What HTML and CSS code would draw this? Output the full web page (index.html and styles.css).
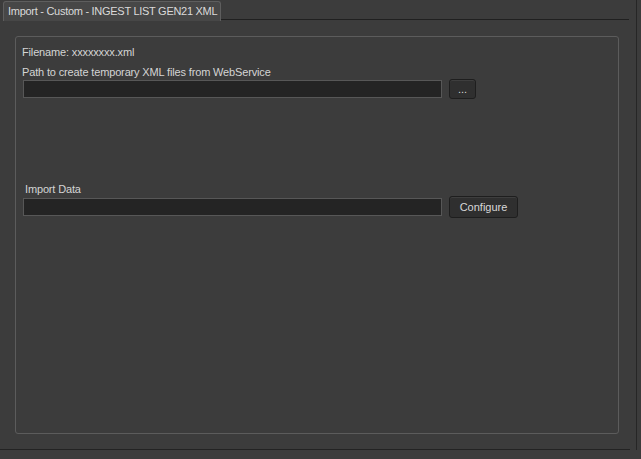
FILE: index.html
```html
<!DOCTYPE html>
<html lang="en">
  <head>
    <meta charset="UTF-8" />
    <title>Import - Custom - INGEST LIST GEN21 XML</title>
    <link rel="stylesheet" href="styles.css">
  </head>
  <body>
    <div class="window">
      <div class="tabs">
        <div class="tab">Import - Custom - INGEST LIST GEN21 XML</div>
        <div class="tab-line"></div>
      </div>
      <div class="pane">
        <div class="group">
          <div class="label">Filename: xxxxxxxx.xml</div>
          <div class="label label-path">Path to create temporary XML files from WebService</div>
          <div class="field-row">
            <div class="field"></div>
            <button class="button button-browse">...</button>
          </div>
          <div class="label label-import">Import Data</div>
          <div class="field-row field-row-import">
            <div class="field"></div>
            <button class="button button-configure">Configure</button>
          </div>
        </div>
      </div>
    </div>
  </body>
</html>
```

FILE: styles.css
```css
body {
  margin: 0;
  background-color: #3c3c3c;
  font-family: "Liberation Sans", Arial, sans-serif;
  font-size: 11px;
  color: #d4d4d4;
  width: 641px;
  height: 459px;
  overflow: hidden;
}
.window {
  width: 637px;
  height: 450px;
  border-right: 1px solid #262626;
  box-sizing: border-box;
}
.tabs {
  display: flex;
  align-items: flex-end;
  height: 21px;
  padding-left: 3px;
}
.tab {
  height: 20px;
  box-sizing: border-box;
  padding: 3px 3px 0 4px;
  font-size: 11px;
  letter-spacing: -0.28px;
  white-space: nowrap;
  background-color: #474747;
  border: 1px solid #5e5e5e;
  border-bottom: none;
  border-radius: 3px 3px 0 0;
  color: #dadada;
}
.tab-line {
  flex: 1;
  margin-right: 7px;
  margin-bottom: 1px;
  border-bottom: 1px solid #202020;
}
.pane {
  height: 429px;
  width: 630px;
  box-sizing: border-box;
  padding: 15px 0 0 15px;
  border-bottom: 1px solid #232323;
}
.group {
  width: 604px;
  height: 398px;
  box-sizing: border-box;
  border: 1px solid #5c5c5c;
  border-radius: 3px;
  padding: 9px 0 0 6px;
  display: flex;
  flex-direction: column;
}
.label {
  height: 13px;
  line-height: 13px;
  white-space: nowrap;
  letter-spacing: -0.15px;
}
.label-path {
  margin-top: 7px;
}
.field-row {
  display: flex;
  align-items: center;
  margin-top: 0;
  height: 20px;
}
.field {
  width: 419px;
  height: 18px;
  margin-left: 1px;
  box-sizing: border-box;
  background-color: #242424;
  border: 1px solid #575757;
}
.button {
  margin-left: 7px;
  height: 20px;
  box-sizing: border-box;
  background-color: #2f2f2f;
  border: 1px solid #1e1e1e;
  border-radius: 3px;
  box-shadow: inset 0 1px 0 #3e3e3e;
  color: #d8d8d8;
  font-family: inherit;
  font-size: 11px;
  padding: 0;
}
.button-browse {
  width: 27px;
  line-height: 14px;
}
.label-import {
  margin-top: 84px;
  margin-left: 3px;
}
.field-row-import {
  margin-top: 0;
  height: 22px;
}
.button-configure {
  width: 69px;
  height: 22px;
  font-size: 11px;
}
```
